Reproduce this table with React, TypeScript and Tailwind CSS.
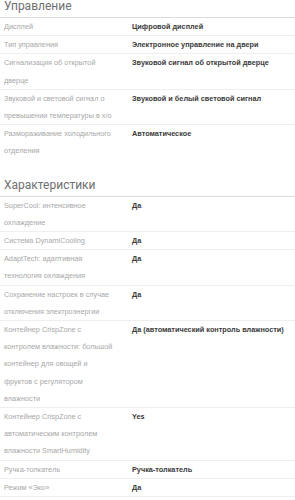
const sections = [
  {
    title: 'Управление',
    rows: [
      ['Дисплей', 'Цифровой дисплей'],
      ['Тип управления', 'Электронное управление на двери'],
      ['Сигнализация об открытой дверце', 'Звуковой сигнал об открытой дверце'],
      ['Звуковой и световой сигнал о превышении температуры в х/о', 'Звуковой и белый световой сигнал'],
      ['Размораживание холодильного отделения', 'Автоматическое'],
    ],
  },
  {
    title: 'Характеристики',
    rows: [
      ['SuperCool: интенсивное охлаждение', 'Да'],
      ['Система DynamiCooling', 'Да'],
      ['AdaptTech: адаптивная технология охлаждения', 'Да'],
      ['Сохранение настроек в случае отключения электроэнергии', 'Да'],
      [
        'Контейнер CrispZone с контролем влажности: большой контейнер для овощей и\nфруктов с регулятором влажности',
        'Да (автоматический контроль влажности)',
      ],
      ['Контейнер CrispZone с автоматическим контролем влажности SmartHumidity', 'Yes'],
      ['Ручка-толкатель', 'Ручка-толкатель'],
      ['Режим «Эко»', 'Да'],
    ],
  },
]

export default function App() {
  return (
    <div className="w-[295px] h-[500px] overflow-hidden bg-white font-['Liberation_Sans',Arial,sans-serif]">
      {sections.map((section, si) => (
        <section key={section.title} className={si > 0 ? 'mt-[19px]' : ''}>
          <h2 className="border-b border-[#dcdcdc] px-1 pb-[4px] font-['Roboto',sans-serif] text-[12px] leading-[13px] text-[#6f6f6f]">
            {section.title}
          </h2>
          <div>
            {section.rows.map(([label, value], ri) => (
              <div
                key={label}
                className={`grid grid-cols-[128px_1fr] text-[7.3px] leading-[17.2px] ${
                  ri < section.rows.length - 1 || si > 0 ? 'border-b border-[#efefef]' : ''
                }`}
              >
                <div className="whitespace-pre-line pl-1 pr-[10px] text-[#a8a8a8]">{label}</div>
                <div className="pl-1 font-bold text-[#3a3a3a]">{value}</div>
              </div>
            ))}
          </div>
        </section>
      ))}
    </div>
  )
}
